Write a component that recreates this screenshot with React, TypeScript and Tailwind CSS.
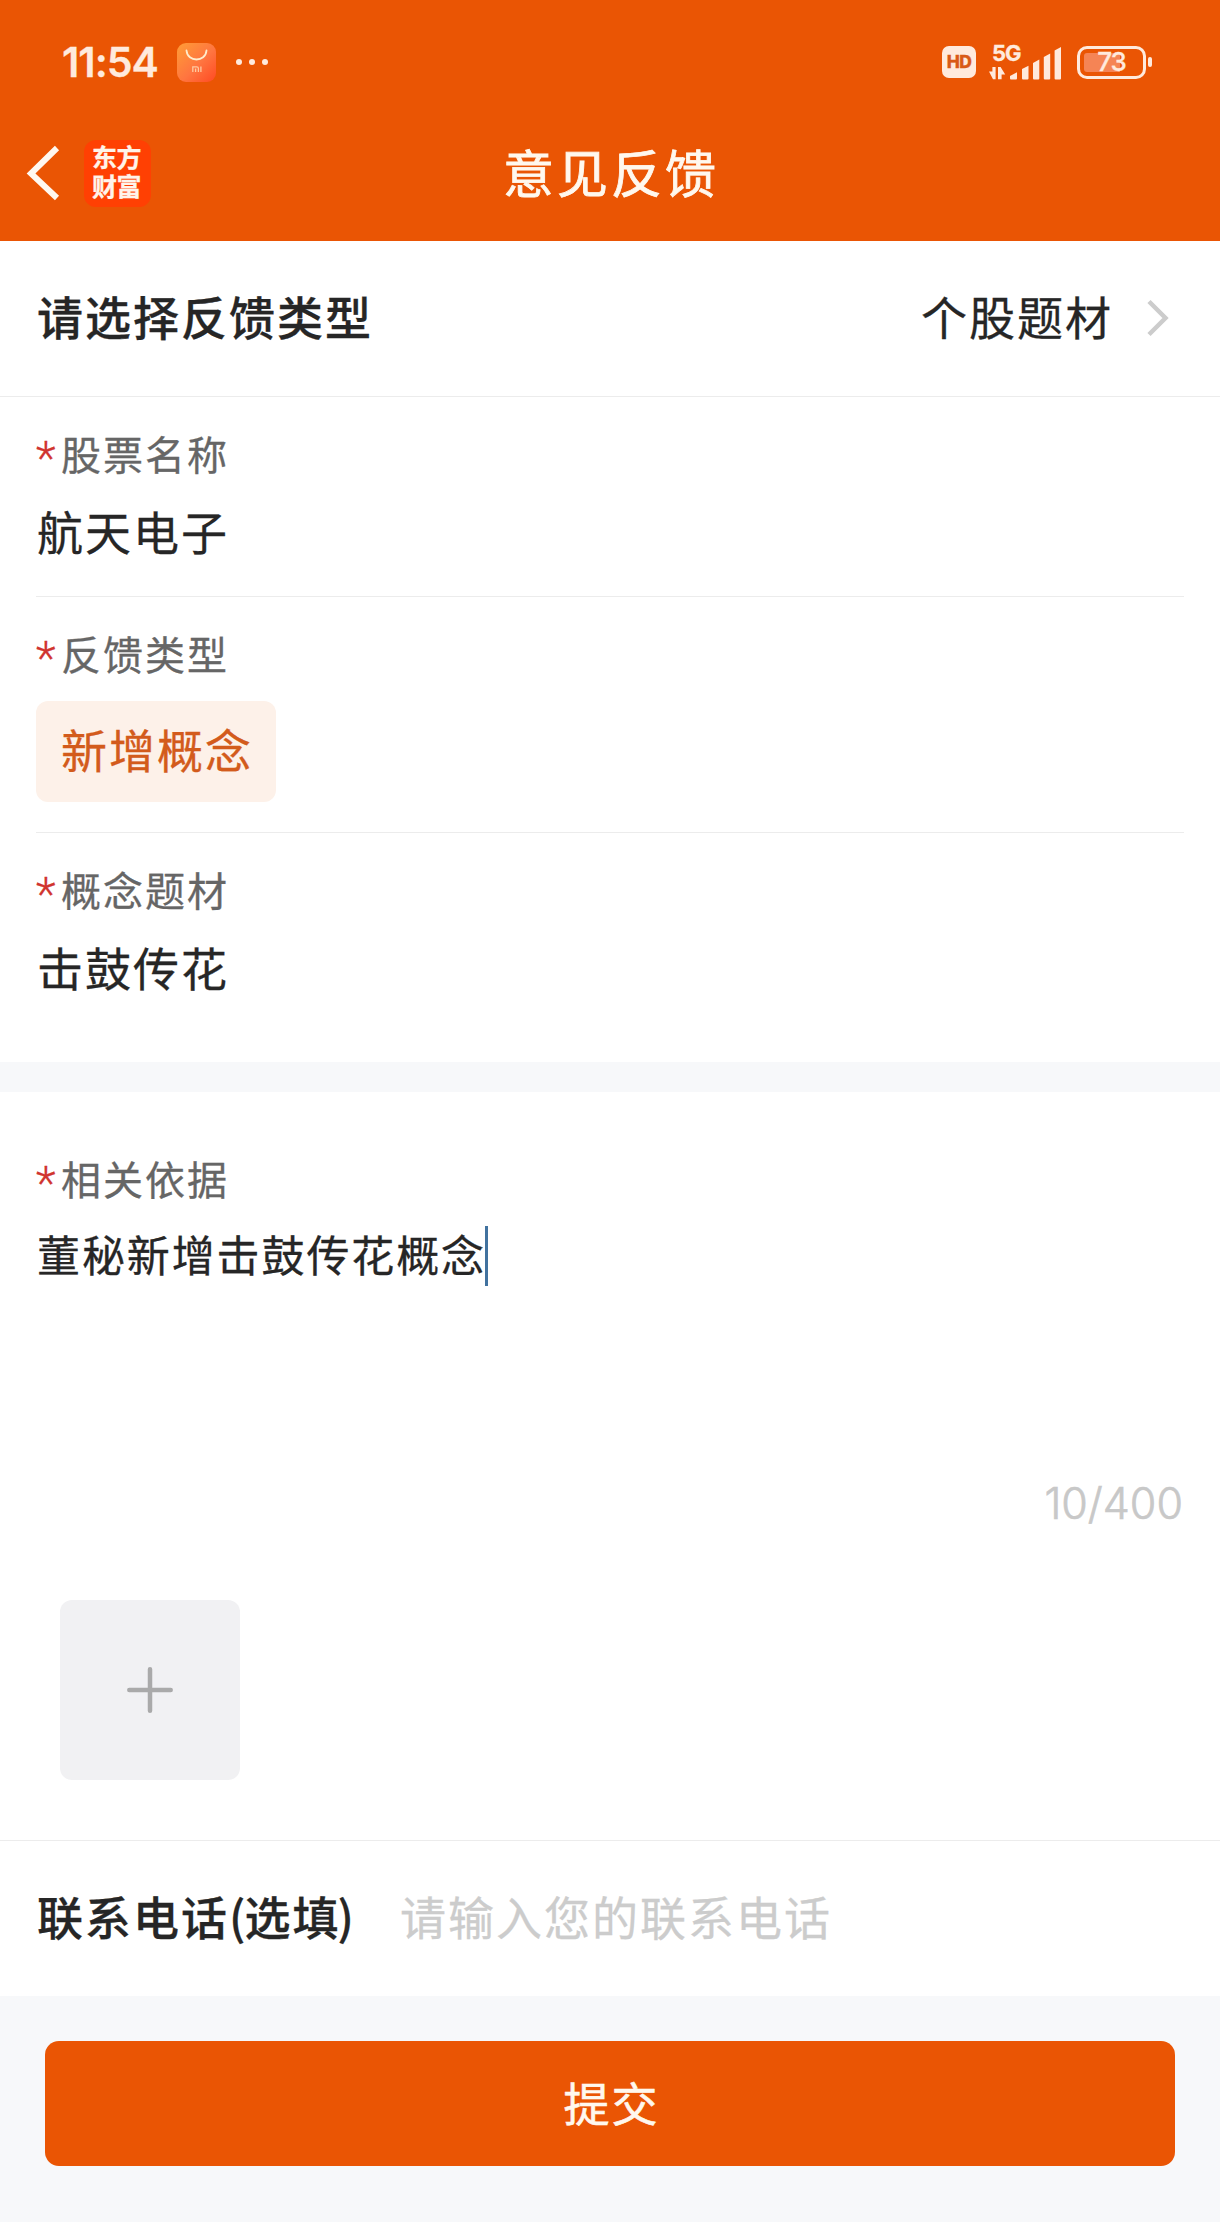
import { useState } from "react";
import type { ReactNode } from "react";
import clsx from "clsx";

function SignalIcon() {
  return (
    <svg className="h-[36px] w-[74px]" viewBox="0 0 74 36" fill="#ffeadd">
      <path d="M0 27.5h3.4v-4.6h3.2v12.3h-2.6zM9 22.9h2.6l4.6 7.7h-3.6v4.6H9z" />
      <path d="M21 32l7-3.8v6.3q0 1-1 1h-5q-1 0-1-1z" />
      <path d="M33 25l6.5-3.2v12.7q0 1-1 1h-4.5q-1 0-1-1z" />
      <path d="M44 19l6.3-3.5v19q0 1-1 1h-4.3q-1 0-1-1z" />
      <path d="M54.8 13l6.4-3.5v25q0 1-1 1h-4.4q-1 0-1-1z" />
      <path d="M65.6 6.5l6.4-3.5v31.5q0 1-1 1h-4.4q-1 0-1-1z" />
    </svg>
  );
}

function StatusBar() {
  return (
    <div className="flex h-[105px] items-center pt-[19px] pr-[68px] pl-[62px] text-[#ffeadd]">
      <span className="w-[115px] font-['Inter'] text-[41px] leading-[50px] font-semibold tracking-[-1px]">11:54</span>
      {/* Mi store notification */}
      <svg className="size-[39px]" viewBox="0 0 39 39" fill="none">
        <defs>
          <linearGradient id="store" x1="0" y1="0" x2="1" y2="1">
            <stop offset="0" stopColor="#ff9d36" />
            <stop offset="0.55" stopColor="#ff7540" />
            <stop offset="1" stopColor="#ff4a22" />
          </linearGradient>
        </defs>
        <rect width="39" height="39" rx="9" fill="url(#store)" />
        <path d="M9.5 7.5c1 12 19 12 20 0" stroke="#ffeccb" strokeWidth="1.8" strokeLinecap="round" />
        <path d="M15.8 29v-5.2h4q1.6 0 1.6 1.6V29M18.6 25.6V29M23.9 23.4V29" stroke="#ffc9a0" strokeWidth="1.3" />
      </svg>
      <svg className="ml-[20px] h-[6px] w-[33px]" viewBox="0 0 33 6" fill="#ffeadd">
        <circle cx="3" cy="3" r="3" />
        <circle cx="16" cy="3" r="3" />
        <circle cx="29" cy="3" r="3" />
      </svg>
      <div className="ml-auto flex items-center">
        <div className="flex h-[32px] w-[34px] items-center justify-center rounded-[7px] bg-[#ffeadd] font-['Inter'] text-[17.5px] leading-none font-extrabold tracking-[-0.5px] text-[#d95a17]">
          HD
        </div>
        <div className="relative ml-[13px]">
          <SignalIcon />
          <span className="absolute top-[-2px] left-[3px] font-['Inter'] text-[22px] leading-[22px] font-bold tracking-[-1px]">5G</span>
        </div>
        <div className="relative ml-[14px] flex h-[33px] w-[69px] items-center justify-center rounded-[10px] border-[3.5px] border-[#ffeadd]">
          <div className="absolute top-[4px] left-[4px] h-[19px] w-[36px] rounded-l-[3px] bg-[#f58455]" />
          <span className="relative font-['Inter'] text-[26px] leading-none font-medium tracking-[-1px]">73</span>
        </div>
        <div className="ml-[2px] h-[10px] w-[4px] rounded-[2px] bg-[#ffeadd]" />
      </div>
    </div>
  );
}

function NavBar() {
  return (
    <div className="relative flex h-[136px] items-center pl-[26px] text-white">
      <button aria-label="返回">
        <svg className="h-[56px] w-[34px]" viewBox="0 0 34 56" fill="none" stroke="#fff8f0" strokeWidth="6">
          <path d="M31 3L5 28.5L31 53" />
        </svg>
      </button>
      <div className="ml-[24px] size-[67px] rounded-[12px] bg-[#ff4003] pt-[2px] pr-[9px] pl-[8px] text-[25px] leading-[29px] font-bold tracking-[-0.5px] break-all text-[#fff4ea]">
        东方财富
      </div>
      <h1 className="absolute inset-x-0 top-[36px] pl-[2px] text-center text-[51px] leading-[60px] tracking-[3px] text-[#fff8ee] [-webkit-text-stroke:0.8px_#fff8ee]">
        意见反馈
      </h1>
    </div>
  );
}

function Label({ children }: { children: ReactNode }) {
  return (
    <div className="flex h-[56px] text-[40px] leading-[56px] tracking-[2px] text-[#666]">
      <span className="w-[25px] pt-[5px] font-['Roboto'] text-[46px] font-light tracking-normal text-[#d0342f]">*</span>
      {children}
    </div>
  );
}

function Field({ label, last, children }: { label: string; last?: boolean; children: ReactNode }) {
  return (
    <div className={clsx("mx-[36px] pt-[28px]", !last && "border-b border-[#ececec]")}>
      <Label>{label}</Label>
      {children}
    </div>
  );
}

export default function App() {
  const [text] = useState("董秘新增击鼓传花概念");

  return (
    <div className="h-[2222px] w-[1220px] overflow-hidden bg-[#f7f8fa] font-['Noto_Sans_CJK_SC',sans-serif] text-[#262626] [-webkit-text-stroke:0.3px]">
      <header className="bg-[#ea5504]">
        <StatusBar />
        <NavBar />
      </header>

      <section className="bg-white">
        <div className="flex h-[156px] items-center border-b border-[#ececec] pr-[50px] pb-[6px] pl-[37px] text-[46px] tracking-[2px]">
          <span className="font-medium">请选择反馈类型</span>
          <span className="ml-auto">个股题材</span>
          <svg className="mt-[5px] ml-[33px] h-[38px] w-[24px]" viewBox="0 0 24 38" fill="none" stroke="#ccc" strokeWidth="4.5">
            <path d="M3 2.5L19.5 19L3 35.5" />
          </svg>
        </div>

        <Field label="股票名称">
          <div className="mt-[17px] h-[98px] pl-[1px] text-[46px] leading-[64px] tracking-[2px]">航天电子</div>
        </Field>
        <Field label="反馈类型">
          <div className="mt-[20px] mb-[30px] flex h-[101px] w-[240px] items-center rounded-[12px] bg-[#fdf1e9] pb-[6px] pl-[25px] text-[46px] tracking-[2px] text-[#d35b1c]">
            新增概念
          </div>
        </Field>
        <Field label="概念题材" last>
          <div className="mt-[17px] h-[128px] pl-[1px] text-[46px] leading-[64px] tracking-[2px]">击鼓传花</div>
        </Field>
      </section>

      <section className="mt-[30px] bg-white">
        <div className="px-[36px] pt-[58px]">
          <Label>相关依据</Label>
          <div className="mt-[17px] flex h-[250px] pl-[1px] text-[43px] leading-[60px] tracking-[1.9px]">
            <span>{text}</span>
            <span className="mt-[3px] -ml-px h-[60px] w-[3px] bg-[#41729f]" />
          </div>
          <div className="pr-[1px] text-right font-['Inter'] text-[43px] leading-[60px] font-light text-[#c8c8c8] [-webkit-text-stroke:0.7px]">
            {text.length}/400
          </div>
        </div>
        <div className="px-[60px] pt-[67px] pb-[60px]">
          <button className="flex size-[180px] items-center justify-center rounded-[12px] bg-[#f1f1f3]" aria-label="添加图片">
            <svg className="size-[46px]" viewBox="0 0 46 46" stroke="#aaa" strokeWidth="4.5" strokeLinecap="round">
              <path d="M23 2.3V43.7M2.3 23H43.7" />
            </svg>
          </button>
        </div>
        <div className="flex h-[156px] items-center border-t border-[#ececec] pb-[6px] pl-[37px] text-[46px] tracking-[2px]">
          <span className="w-[363px] font-medium">
            联系电话<span className="tracking-[-1px]">(</span>选填<span className="-ml-[3px]">)</span>
          </span>
          <span className="text-[#ccc]">请输入您的联系电话</span>
        </div>
      </section>

      <footer className="px-[45px] pt-[45px]">
        <button className="block h-[125px] w-full rounded-[14px] bg-[#ea5504] pb-[6px] pl-[3px] text-[46px] leading-[60px] tracking-[2px] text-[#fff8ee] [-webkit-text-stroke:0.6px]">
          提交
        </button>
      </footer>
    </div>
  );
}
